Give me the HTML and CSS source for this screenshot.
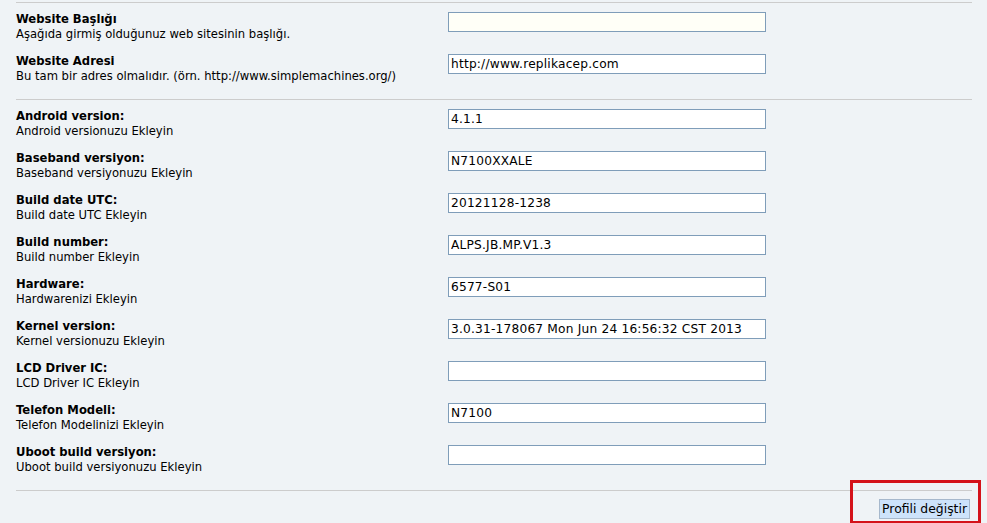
FILE: index.html
```html
<!DOCTYPE html>
<html lang="tr">
<head>
<meta charset="utf-8">
<link rel="stylesheet" href="styles.css">
</head>
<body>
<div class="panel">
  <hr class="sep">
  <dl class="fields">
    <dt><strong>Website Başlığı</strong><span class="desc">Aşağıda girmiş olduğunuz web sitesinin başlığı.</span></dt>
    <dd><input class="field cream" type="text" value=""></dd>
    <dt><strong>Website Adresi</strong><span class="desc">Bu tam bir adres olmalıdır. (örn. http://www.simplemachines.org/)</span></dt>
    <dd><input class="field" type="text" value="http://www.replikacep.com"></dd>
  </dl>
  <hr class="sep">
  <dl class="fields">
    <dt><strong>Android version:</strong><span class="desc">Android versionuzu Ekleyin</span></dt>
    <dd><input class="field" type="text" value="4.1.1"></dd>
    <dt><strong>Baseband versiyon:</strong><span class="desc">Baseband versiyonuzu Ekleyin</span></dt>
    <dd><input class="field" type="text" value="N7100XXALE"></dd>
    <dt><strong>Build date UTC:</strong><span class="desc">Build date UTC Ekleyin</span></dt>
    <dd><input class="field" type="text" value="20121128-1238"></dd>
    <dt><strong>Build number:</strong><span class="desc">Build number Ekleyin</span></dt>
    <dd><input class="field" type="text" value="ALPS.JB.MP.V1.3"></dd>
    <dt><strong>Hardware:</strong><span class="desc">Hardwarenizi Ekleyin</span></dt>
    <dd><input class="field" type="text" value="6577-S01"></dd>
    <dt><strong>Kernel version:</strong><span class="desc">Kernel versionuzu Ekleyin</span></dt>
    <dd><input class="field" type="text" value="3.0.31-178067 Mon Jun 24 16:56:32 CST 2013"></dd>
    <dt><strong>LCD Driver IC:</strong><span class="desc">LCD Driver IC Ekleyin</span></dt>
    <dd><input class="field" type="text" value=""></dd>
    <dt><strong>Telefon Modeli:</strong><span class="desc">Telefon Modelinizi Ekleyin</span></dt>
    <dd><input class="field" type="text" value="N7100"></dd>
    <dt><strong>Uboot build versiyon:</strong><span class="desc">Uboot build versiyonuzu Ekleyin</span></dt>
    <dd><input class="field" type="text" value=""></dd>
  </dl>
  <hr class="sep">
  <div class="actions">
    <button class="submit" type="button">Profili değiştir</button>
    <span class="highlight"></span>
  </div>
</div>
</body>
</html>
```

FILE: styles.css
```css
html, body {
  margin: 0;
  padding: 0;
  background: #eff3f6;
}
body {
  font-family: "DejaVu Sans", Verdana, sans-serif;
  color: #000;
  width: 987px;
  height: 523px;
  overflow: hidden;
}
.panel {
  padding: 2px 15px 0 16px;
  background: #eff3f6;
}
.sep {
  margin: 0;
  border: 0;
  height: 1px;
  background: #cccccc;
}
.fields {
  display: grid;
  grid-template-columns: 432px 1fr;
  grid-auto-rows: 42px;
  margin: 0 0 12px 0;
}
.fields dt {
  margin: 0;
  padding-top: 8px;
  display: flex;
  flex-direction: column;
}
.fields dt strong {
  font-size: 11.6px;
  line-height: 16px;
  font-weight: bold;
  color: #000;
}
.fields dt .desc {
  font-size: 11.6px;
  line-height: 15px;
  color: #000;
}
.fields dd {
  margin: 0;
  padding-top: 8px;
}
.field {
  box-sizing: border-box;
  width: 318px;
  height: 20px;
  margin: 0;
  padding: 1px 2px 0;
  border: 1px solid #7f9db9;
  background: #fff;
  font-family: "DejaVu Sans", Verdana, sans-serif;
  font-size: 12.2px;
  letter-spacing: 0.2px;
  color: #000;
  outline: none;
}
.field.cream {
  background: #fffff7;
}
.actions {
  position: relative;
  display: flex;
  justify-content: flex-end;
  padding: 8px 2px 0 0;
  height: 30px;
}
.submit {
  box-sizing: border-box;
  height: 20px;
  padding: 0 2px;
  margin: 0;
  border: 1px solid #a6b8cc;
  background: #cde3fb;
  font-family: "DejaVu Sans", Verdana, sans-serif;
  font-size: 12.4px;
  line-height: 18px;
  color: #000;
}
.highlight {
  position: absolute;
  left: 834px;
  top: -11px;
  width: 131px;
  height: 44px;
  box-sizing: border-box;
  border: 3px solid #d4121a;
  pointer-events: none;
}
```
